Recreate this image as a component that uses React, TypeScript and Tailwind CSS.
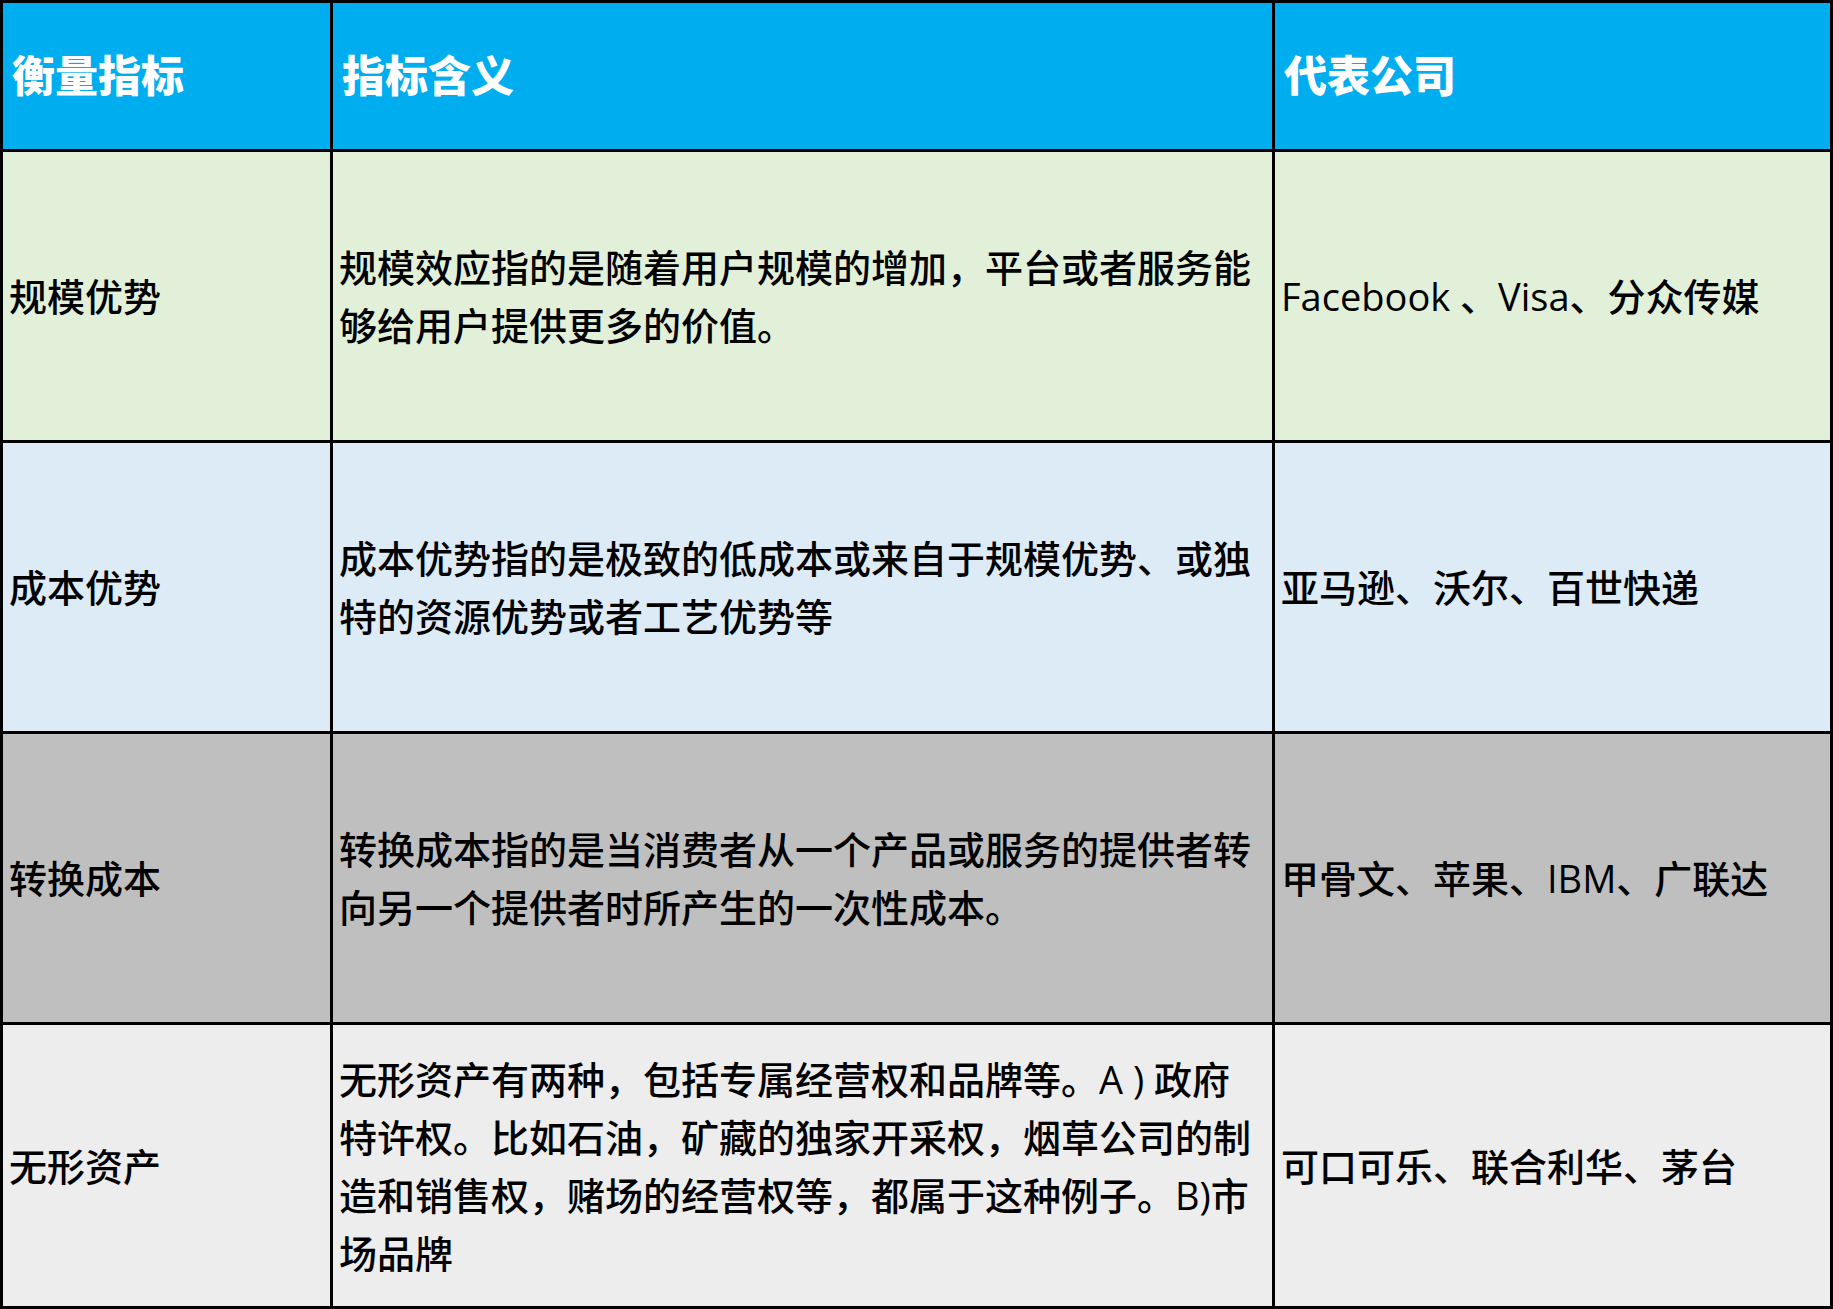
const font = { fontFamily: '"Open Sans", "Noto Sans CJK SC", sans-serif' }

const rows = [
  {
    name: '规模优势',
    meaning: ['规模效应指的是随着用户规模的增加，平台或者服务能', '够给用户提供更多的价值。'],
    company: 'Facebook 、Visa、分众传媒',
    bg: 'bg-[#e2f0d9]',
  },
  {
    name: '成本优势',
    meaning: ['成本优势指的是极致的低成本或来自于规模优势、或独', '特的资源优势或者工艺优势等'],
    company: '亚马逊、沃尔、百世快递',
    bg: 'bg-[#ddebf7]',
  },
  {
    name: '转换成本',
    meaning: ['转换成本指的是当消费者从一个产品或服务的提供者转', '向另一个提供者时所产生的一次性成本。'],
    company: '甲骨文、苹果、IBM、广联达',
    bg: 'bg-[#bfbfbf]',
  },
  {
    name: '无形资产',
    meaning: [
      '无形资产有两种，包括专属经营权和品牌等。A ) 政府',
      '特许权。比如石油，矿藏的独家开采权，烟草公司的制',
      '造和销售权，赌场的经营权等，都属于这种例子。B)市',
      '场品牌',
    ],
    company: '可口可乐、联合利华、茅台',
    bg: 'bg-[#ededed]',
  },
]

const head = 'flex items-center pl-[9px] bg-[#00aeef] text-white text-[43px] font-black'
const cell = 'flex items-center px-[6px] text-black text-[38px] leading-[58px] whitespace-nowrap font-medium'

export default function App() {
  return (
    <div
      style={font}
      className="w-[1833px] h-[1309px] bg-black p-[3px] grid grid-cols-[327px_939px_1fr] grid-rows-[146px_288px_288px_288px_1fr] gap-[3px]"
    >
      <div className={head}>衡量指标</div>
      <div className={head}>指标含义</div>
      <div className={head}>代表公司</div>
      {rows.map((r) => (
        <>
          <div key={r.name + 'a'} className={`${cell} ${r.bg}`}>{r.name}</div>
          <div key={r.name + 'b'} className={`${cell} ${r.bg}`}>
            <div>
              {r.meaning.map((l) => (
                <div key={l}>{l}</div>
              ))}
            </div>
          </div>
          <div key={r.name + 'c'} className={`${cell} ${r.bg}`}>{r.company}</div>
        </>
      ))}
    </div>
  )
}
